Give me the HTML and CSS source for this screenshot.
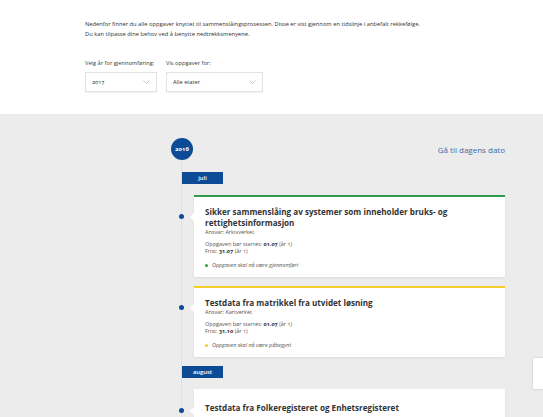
FILE: index.html
```html
<!DOCTYPE html>
<html lang="no">
<head>
<meta charset="utf-8">
<title>Oppgaver</title>
<link rel="stylesheet" href="styles.css">
</head>
<body>
<section class="intro">
  <p class="lead">Nedenfor finner du alle oppgaver knyttet til sammenslåingsprosessen. Disse er vist gjennom en tidslinje i anbefalt rekkefølge.<br>Du kan tilpasse dine behov ved å benytte nedtrekksmenyene.</p>
  <div class="filters">
    <div class="filter">
      <label class="filter-label">Velg år for gjennomføring:</label>
      <div class="select select-year"><span>2017</span><svg class="chev" width="7" height="4" viewBox="0 0 7 4"><path d="M0.5 0.5 L3.5 3.5 L6.5 0.5" fill="none" stroke="#b9b9b9" stroke-width="0.8"/></svg></div>
    </div>
    <div class="filter">
      <label class="filter-label">Vis oppgaver for:</label>
      <div class="select select-agency"><span>Alle etater</span><svg class="chev" width="7" height="4" viewBox="0 0 7 4"><path d="M0.5 0.5 L3.5 3.5 L6.5 0.5" fill="none" stroke="#b9b9b9" stroke-width="0.8"/></svg></div>
    </div>
  </div>
</section>

<section class="area">
  <div class="area-head">
    <div class="year">2016</div>
    <a class="today">Gå til dagens dato</a>
  </div>
  <div class="timeline">
    <div class="month">juli</div>
    <article class="card card-green">
      <h2 class="card-title">Sikker sammenslåing av systemer som inneholder bruks- og rettighetsinformasjon</h2>
      <p class="owner">Ansvar: Arkivverket</p>
      <div class="dates"><p>Oppgaven bør startes: <b>01.07</b> (år 1)</p><p>Frist: <b>31.07</b> (år 1)</p></div>
      <p class="status status-green">Oppgaven skal nå være gjennomført</p>
    </article>
    <article class="card card-yellow">
      <h2 class="card-title">Testdata fra matrikkel fra utvidet løsning</h2>
      <p class="owner">Ansvar: Kartverket</p>
      <div class="dates"><p>Oppgaven bør startes: <b>01.07</b> (år 1)</p><p>Frist: <b>31.10</b> (år 1)</p></div>
      <p class="status status-yellow">Oppgaven skal nå være påbegynt</p>
    </article>
    <div class="month">august</div>
    <article class="card card-plain">
      <h2 class="card-title">Testdata fra Folkeregisteret og Enhetsregisteret</h2>
    </article>
  </div>
</section>

<div class="feedback"></div>
</body>
</html>
```

FILE: styles.css
```css
* { box-sizing: border-box; }
html, body { margin: 0; padding: 0; }
body {
  font-family: "Open Sans", "Noto Sans", sans-serif;
  color: #333;
  background: #ececec;
  height: 417px;
  overflow: hidden;
  font-variant-numeric: oldstyle-nums;
}
p, h2 { margin: 0; }

.intro {
  background: #fff;
  padding: 19px 38px 22px 85px;
}
.lead {
  font-size: 5.75px;
  line-height: 10px;
  color: #333;
}
.filters {
  display: flex;
  gap: 9px;
  margin-top: 21px;
}
.filter { display: flex; flex-direction: column; }
.filter-label {
  font-size: 5.7px;
  line-height: 6px;
  color: #3a3a3a;
  margin-bottom: 6px;
}
.select {
  height: 20px;
  border: 1px solid #e2e2e2;
  box-shadow: 0 1px 1px rgba(0,0,0,0.04);
  background: #fff;
  display: flex;
  align-items: center;
  justify-content: space-between;
  padding: 0 6px 0 6px;
  font-size: 5.7px;
  color: #333;
}
.select-year { width: 72px; }
.select-agency { width: 97px; }
.chev { display: block; }

.area {
  background: #ececec;
  padding: 24px 38px 0 171px;
}
.area-head {
  display: flex;
  align-items: center;
  justify-content: space-between;
}
.year {
  width: 22px;
  height: 22px;
  border-radius: 50%;
  background: #0d4b96;
  color: #fff;
  font-size: 6px;
  font-weight: 700;
  display: flex;
  align-items: center;
  justify-content: center;
}
.today {
  font-size: 8px;
  color: #3b69ab;
}
.timeline {
  margin-left: 10px;
  border-left: 1px solid #e0e0e0;
  padding-top: 12px;
  padding-bottom: 40px;
}
.month {
  width: 41px;
  height: 12px;
  background: #0d4b96;
  color: #fff;
  font-size: 5.8px;
  font-weight: 600;
  display: flex;
  align-items: center;
  justify-content: center;
  margin-bottom: 11px;
}
.card {
  position: relative;
  margin-left: 12px;
  margin-bottom: 9px;
  background: #fff;
  border-top: 2px solid #fff;
  padding: 9px 11px 8px;
  box-shadow: 0 1px 2px rgba(0,0,0,0.07);
}
.card + .month { margin-top: 2px; }
.card-green { border-top-color: #2f9c4e; }
.card-yellow { border-top-color: #f2cd2e; }
.card-plain { padding-top: 11px; padding-bottom: 12px; }
.card::before {
  content: "";
  position: absolute;
  left: -15px;
  top: 17px;
  width: 5px;
  height: 5px;
  border-radius: 50%;
  background: #0d4b96;
}
.card::after {
  content: "";
  position: absolute;
  left: -4px;
  top: 16px;
  border-top: 4px solid transparent;
  border-bottom: 4px solid transparent;
  border-right: 4px solid #fff;
}
.card-title {
  font-size: 8.1px;
  line-height: 11px;
  font-weight: 700;
  color: #333;
}
.owner {
  font-size: 5.5px;
  line-height: 7px;
  margin-top: 1px;
  color: #555;
}
.dates {
  font-size: 5.5px;
  line-height: 7px;
  margin-top: 5px;
  color: #555;
  display: flex;
  flex-direction: column;
}
.dates b { color: #333; font-weight: 700; }
.status {
  font-size: 5.4px;
  line-height: 7px;
  margin-top: 7px;
  font-style: italic;
  color: #555;
  display: flex;
  align-items: center;
}
.status::before {
  content: "";
  width: 3px;
  height: 3px;
  border-radius: 50%;
  margin-right: 4px;
}
.status-green::before { background: #2f9c4e; }
.status-yellow::before { background: #f2cd2e; }

.feedback {
  position: fixed;
  left: 532px;
  top: 357px;
  width: 20px;
  height: 33px;
  background: #fff;
  border: 1px solid #dedede;
  border-radius: 2px;
  box-shadow: 0 0 2px rgba(0,0,0,0.06);
}
```
